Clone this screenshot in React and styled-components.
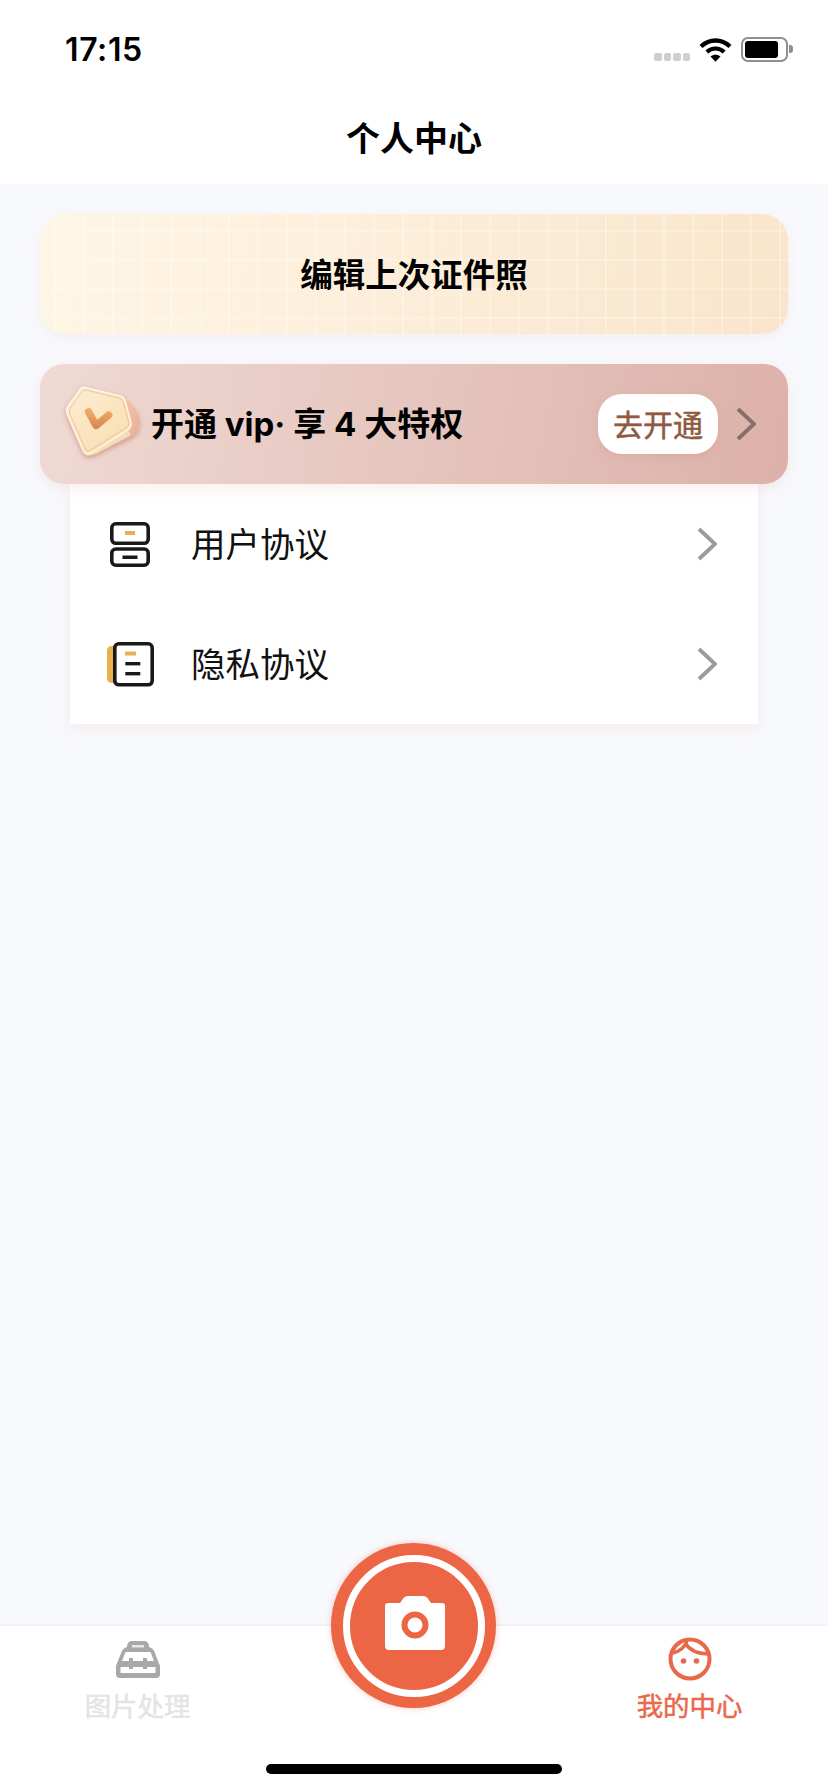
import React from "react";
import styled, { createGlobalStyle } from "styled-components";

const GlobalStyle = createGlobalStyle`
  html, body {
    margin: 0;
    padding: 0;
    background: #f8f9fd;
    font-family: Inter, "Noto Sans CJK SC", sans-serif;
  }
  * { box-sizing: border-box; }
`;

const Page = styled.div`
  width: 828px;
  height: 1792px;
  display: flex;
  flex-direction: column;
  overflow: hidden;
  background: #f8f9fd;
`;

const Top = styled.header`
  background: #fff;
  height: 184px;
  flex-shrink: 0;
`;

const StatusBar = styled.div`
  height: 92px;
  padding: 37px 40px 0 65px;
  display: flex;
  justify-content: space-between;
  align-items: flex-start;
`;

const Time = styled.div`
  font-size: 32px;
  line-height: 26px;
  font-weight: 600;
  color: #000;
  letter-spacing: 0.6px;
`;

const StatusIcons = styled.div`
  display: flex;
  align-items: flex-end;
  height: 25px;
`;

const Signal = styled.div`
  display: flex;
  gap: 2px;
  margin: 0 9px 1px 0;
`;

const SignalDot = styled.span`
  width: 7.5px;
  height: 8px;
  border-radius: 2px;
  background: #cfcfcf;
`;

const Battery = styled.div`
  width: 47px;
  height: 25px;
  margin-left: 9px;
  border: 2px solid #8f8f8f;
  border-radius: 7px;
  padding: 2px;
  position: relative;
  &::before {
    content: "";
    display: block;
    width: 33px;
    height: 17px;
    background: #000;
    border-radius: 3px;
  }
  &::after {
    content: "";
    position: absolute;
    right: -7px;
    top: 6px;
    width: 4px;
    height: 8px;
    background: #8f8f8f;
    border-radius: 0 3px 3px 0;
  }
`;

const Title = styled.h1`
  margin: 0;
  height: 92px;
  padding-bottom: 4px;
  display: flex;
  align-items: center;
  justify-content: center;
  font-size: 34px;
  font-weight: 700;
  color: #000;
`;

const Content = styled.main`
  flex: 1;
  padding: 30px 40px 0;
  display: flex;
  flex-direction: column;
`;

const EditCard = styled.div`
  height: 120px;
  padding-bottom: 4px;
  border-radius: 26px;
  display: flex;
  align-items: center;
  justify-content: center;
  font-size: 32.5px;
  font-weight: 700;
  color: #000;
  background:
    linear-gradient(rgba(255, 255, 255, 0.24) 2px, transparent 2px) 0 16px / 29px 29px,
    linear-gradient(90deg, rgba(255, 255, 255, 0.28) 1.5px, transparent 1.5px) 14px 0 / 29px 29px,
    linear-gradient(100deg, #fff6e6, #f9e5cb);
  box-shadow: 0 4px 14px rgba(235, 200, 190, 0.2);
`;

const VipCard = styled.div`
  position: relative;
  z-index: 1;
  height: 120px;
  margin-top: 30px;
  padding: 0 32px 0 20px;
  border-radius: 24px;
  display: flex;
  align-items: center;
  background: linear-gradient(100deg, #efdad3, #dcb1a9);
  box-shadow: 0 4px 14px rgba(225, 170, 160, 0.2);
`;

const VipText = styled.div`
  flex: 1;
  margin-left: 1px;
  padding-bottom: 4px;
  font-size: 33px;
  font-weight: 700;
  color: #000;
  white-space: pre;
`;

const VipButton = styled.div`
  width: 120px;
  height: 60px;
  margin-right: 18px;
  padding-bottom: 2px;
  border-radius: 24px;
  background: #fff;
  display: flex;
  align-items: center;
  justify-content: center;
  font-size: 30px;
  font-weight: 400;
  -webkit-text-stroke: 0.5px #8f5a3f;
  color: #8f5a3f;
  box-shadow: 0 3px 8px rgba(210, 150, 140, 0.35);
`;

const Menu = styled.div`
  margin: 0 30px;
  background: #fff;
  box-shadow: 0 4px 12px rgba(235, 190, 190, 0.25);
`;

const Row = styled.div`
  height: 120px;
  padding: 0 41px 0 36px;
  display: flex;
  align-items: center;
`;

const RowIcon = styled.div`
  width: 48px;
  display: flex;
  justify-content: center;
`;

const RowLabel = styled.div`
  flex: 1;
  margin-left: 37px;
  padding-bottom: 4px;
  font-size: 34.5px;
  font-weight: 400;
  color: #111;
`;

const TabBar = styled.nav`
  position: relative;
  height: 166px;
  flex-shrink: 0;
  display: grid;
  grid-template-columns: 1fr 1fr 1fr;
  padding-top: 11px;
  background: #fff;
  box-shadow: 0 -1px 2px rgba(235, 225, 230, 0.6);
`;

const Tab = styled.div`
  display: flex;
  flex-direction: column;
  align-items: center;
  font-size: 26.4px;
  font-weight: 400;
  line-height: 34px;
  color: ${(p) => (p.$active ? "#e8694a" : "#e4e4e4")};
  -webkit-text-stroke: 0.5px ${(p) => (p.$active ? "#e8694a" : "#e4e4e4")};
`;

const TabIcon = styled.div`
  height: 44px;
  margin-bottom: 8px;
  display: flex;
  align-items: center;
`;

const TabLabel = styled.span`
  margin-right: 1px;
`;

const ShootButton = styled.div`
  position: absolute;
  left: 331px;
  top: -83px;
  width: 165px;
  height: 165px;
  border-radius: 50%;
  background: #ec6646;
  box-shadow: 0 0 6px rgba(236, 102, 70, 0.35);
  display: flex;
  align-items: center;
  justify-content: center;
`;

const ShootRing = styled.div`
  width: 142px;
  height: 142px;
  padding: 0 0 5px 2px;
  border-radius: 50%;
  border: 7px solid #fff;
  display: flex;
  align-items: center;
  justify-content: center;
`;

const HomeBar = styled.div`
  position: absolute;
  left: 266px;
  bottom: 18px;
  width: 296px;
  height: 10px;
  border-radius: 5px;
  background: #000;
`;

const Wifi = () => (
  <svg width="33" height="25" viewBox="0 0 33 25">
    <path d="M2 9.5C10.5 1.5 22.5 1.5 31 9.5" fill="none" stroke="#000" strokeWidth="4.4" />
    <path d="M7.8 15C13 10.3 20 10.3 25.2 15" fill="none" stroke="#000" strokeWidth="4.2" />
    <path d="M11.5 19.6C14.5 17.2 18.5 17.2 21.5 19.6L16.5 24.8Z" fill="#000" />
  </svg>
);

const Chevron = ({ color }) => (
  <svg width="20" height="34" viewBox="0 0 20 34">
    <polyline points="2,2 18,17 2,32" fill="none" stroke={color} strokeWidth="3.8" />
  </svg>
);

const VipBadge = () => (
  <svg width="90" height="90" viewBox="5 7 85 85" overflow="visible">
    <defs>
      <linearGradient id="badgeBack" x1="0" y1="0" x2="1" y2="1">
        <stop offset="0" stopColor="#f6d2bb" />
        <stop offset="1" stopColor="#e6aa90" />
      </linearGradient>
      <linearGradient id="badgeFace" x1="0" y1="0" x2="0.7" y2="1">
        <stop offset="0" stopColor="#fcedd6" />
        <stop offset="1" stopColor="#f9dfb0" />
      </linearGradient>
      <linearGradient id="badgeTick" x1="0" y1="0" x2="0" y2="1">
        <stop offset="0" stopColor="#eeaa63" />
        <stop offset="1" stopColor="#d98a55" />
      </linearGradient>
      <filter id="badgeGlow" x="-20%" y="-20%" width="140%" height="140%">
        <feDropShadow dx="0" dy="2" stdDeviation="2.5" floodColor="#c07868" floodOpacity="0.65" />
      </filter>
    </defs>
    <g filter="url(#badgeGlow)">
      <path
        d="M64 22L74 33Q79 38 80 46L80 52Q79 57 73 61L44 75Q38 79 30 78L40 50Z"
        fill="url(#badgeBack)"
      />
      <path d="M69 55L36 76Q30 80 27 77L30 79Q36 80 44 75L72 60Z" fill="#f6dcb6" />
      <path
        d="M29 15L62 23Q66 24 67 29L72 48Q73 52 69 55L36 76Q30 80 27 75L12 41Q10 36 13 32L23 18Q25 14 29 15Z"
        fill="url(#badgeFace)"
        stroke="#fff3e2"
        strokeWidth="1.4"
      />
      <path
        d="M30 17.5L61 25Q64.5 26 65 30L70 48Q70.5 51 67.5 53L35 73.5Q31 76 29 73L14.5 40.5Q13 37 15 34L25 20Q27 17 30 17.5Z"
        fill="none"
        stroke="#f0b58d"
        strokeWidth="0.7"
      />
    </g>
    <path
      d="M32 38L39 51L51 41"
      fill="none"
      stroke="url(#badgeTick)"
      strokeWidth="7"
      strokeLinecap="round"
      strokeLinejoin="round"
    />
  </svg>
);

const DrawerIcon = () => (
  <svg width="40" height="45" viewBox="0 0 40 45">
    <rect x="1.8" y="1.8" width="36.4" height="19.5" rx="4" fill="#fff" stroke="#1a1a1a" strokeWidth="3.6" />
    <rect x="1.8" y="27" width="36.4" height="16.2" rx="4" fill="#fff" stroke="#1a1a1a" strokeWidth="3.6" />
    <rect x="15" y="9" width="10" height="4" fill="#e8b04f" />
    <rect x="12.5" y="33.5" width="15" height="3.5" fill="#1a1a1a" />
  </svg>
);

const NoteIcon = () => (
  <svg width="47" height="45" viewBox="0 0 47 45">
    <path d="M10 4H5Q0 4 0 9V36Q0 41 5 41H10Z" fill="#e8b04f" />
    <rect x="7.8" y="1.8" width="37.4" height="41" rx="4" fill="#fff" stroke="#1a1a1a" strokeWidth="3.6" />
    <rect x="18" y="9.5" width="11" height="4" fill="#e8b04f" />
    <rect x="18.3" y="20" width="15" height="3.4" fill="#1a1a1a" />
    <rect x="18.3" y="30" width="15" height="3.4" fill="#1a1a1a" />
  </svg>
);

const CameraIcon = () => (
  <svg width="60" height="54" viewBox="0 0 60 54">
    <path
      d="M3 7H15L18.5 2Q20 0 23 0H38Q41 0 42.5 2L46 7H57Q60 7 60 10V50Q60 54 56 54H4Q0 54 0 50V10Q0 7 3 7Z"
      fill="#fff"
    />
    <circle cx="30" cy="29" r="10.5" fill="#fff" stroke="#ec6646" strokeWidth="6" />
  </svg>
);

const ToolboxIcon = () => (
  <svg width="44" height="37" viewBox="0 0 44 37">
    <path
      d="M11 6Q11 0 16 0H28Q33 0 33 6Q37 7 38.5 11L44 25V33Q44 37 40 37H4Q0 37 0 33V25L5.5 11Q7 7 11 6Z"
      fill="#a8a8a8"
    />
    <rect x="16" y="4" width="12" height="2.5" fill="#e8e8e8" />
    <path d="M9.5 11H34.5L38 20H31V17H27V20H17V17H13V20H6Z" fill="#fff" />
    <path d="M4.5 26H13V28H17V26H27V28H31V26H39.5V32H4.5Z" fill="#fff" />
  </svg>
);

const FaceIcon = () => (
  <svg width="44" height="44" viewBox="0 0 44 44">
    <circle cx="22" cy="22" r="19.5" fill="none" stroke="#e8694a" strokeWidth="4" />
    <path d="M19 4Q16 13 5 16" fill="none" stroke="#e8694a" strokeWidth="3.4" />
    <path d="M17 6Q24 17 41 17" fill="none" stroke="#e8694a" strokeWidth="3.4" />
    <circle cx="15.5" cy="24" r="2.8" fill="#e8694a" />
    <circle cx="28.5" cy="24" r="2.8" fill="#e8694a" />
  </svg>
);

const App = () => {
  return (
    <Page>
      <GlobalStyle />
      <Top>
        <StatusBar>
          <Time>17:15</Time>
          <StatusIcons>
            <Signal>
              <SignalDot />
              <SignalDot />
              <SignalDot />
              <SignalDot />
            </Signal>
            <Wifi />
            <Battery />
          </StatusIcons>
        </StatusBar>
        <Title>个人中心</Title>
      </Top>
      <Content>
        <EditCard>编辑上次证件照</EditCard>
        <VipCard>
          <VipBadge />
          <VipText>开通 vip· 享 4 大特权</VipText>
          <VipButton>去开通</VipButton>
          <Chevron color="#857069" />
        </VipCard>
        <Menu>
          <Row>
            <RowIcon>
              <DrawerIcon />
            </RowIcon>
            <RowLabel>用户协议</RowLabel>
            <Chevron color="#9b9b9b" />
          </Row>
          <Row>
            <RowIcon>
              <NoteIcon />
            </RowIcon>
            <RowLabel>隐私协议</RowLabel>
            <Chevron color="#9b9b9b" />
          </Row>
        </Menu>
      </Content>
      <TabBar>
        <Tab>
          <TabIcon>
            <ToolboxIcon />
          </TabIcon>
          <TabLabel>图片处理</TabLabel>
        </Tab>
        <div />
        <Tab $active>
          <TabIcon>
            <FaceIcon />
          </TabIcon>
          <TabLabel>我的中心</TabLabel>
        </Tab>
        <ShootButton>
          <ShootRing>
            <CameraIcon />
          </ShootRing>
        </ShootButton>
        <HomeBar />
      </TabBar>
    </Page>
  );
};

export default App;
